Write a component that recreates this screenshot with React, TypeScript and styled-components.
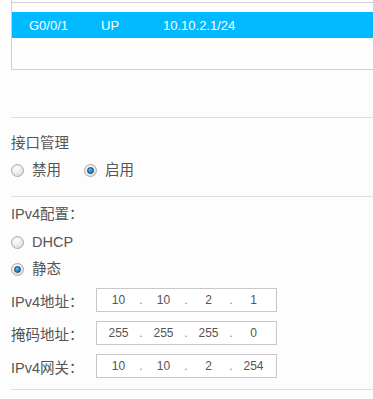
import { Fragment } from 'react';
import styled, { createGlobalStyle } from 'styled-components';

const GlobalStyle = createGlobalStyle`
  html, body {
    margin: 0;
    padding: 0;
    background: #fdfdfd;
    overflow: hidden;
  }
  body {
    font-family: 'Liberation Sans', Arial, 'Noto Sans CJK SC', sans-serif;
    color: #555;
  }
`;

const Page = styled.div`
  width: 373px;
  padding-left: 11px;
  box-sizing: border-box;
`;

const TableBox = styled.div`
  height: 69px;
  border-left: 1px solid #cfcfcf;
  border-bottom: 1px solid #cfcfcf;
  background: #fefefe;
`;

const HeadEdge = styled.div`
  height: 2px;
  border-bottom: 1px solid #cfcfcf;
  margin-bottom: 9px;
`;

const Row = styled.div<{ $active?: boolean }>`
  height: 26px;
  display: flex;
  align-items: center;
  padding-left: 17px;
  font-size: 13px;
  color: ${(p) => (p.$active ? '#fff' : '#555')};
  background: ${(p) => (p.$active ? '#00b9ff' : 'transparent')};
`;

const Cell = styled.span<{ $w: number }>`
  width: ${(p) => p.$w}px;
  white-space: nowrap;
`;

const Divider = styled.div<{ $top: number }>`
  margin-top: ${(p) => p.$top}px;
  height: 1px;
  background: #dedede;
`;

const Section = styled.div<{ $pad: number }>`
  padding-top: ${(p) => p.$pad}px;
  display: flex;
  flex-direction: column;
`;

const Title = styled.div`
  height: 20px;
  line-height: 20px;
  font-size: 14.5px;
`;

const RadioLine = styled.div<{ $gap: number }>`
  margin-top: ${(p) => p.$gap}px;
  height: 20px;
  display: flex;
  align-items: center;
  gap: 23px;
`;

const RadioItem = styled.label`
  display: flex;
  align-items: center;
  gap: 8px;
  font-size: 14.5px;
  line-height: 20px;
`;

const Dot = styled.span<{ $on?: boolean }>`
  width: 11px;
  height: 11px;
  border-radius: 50%;
  border: 1px solid #a9a9a9;
  background: radial-gradient(circle at 40% 35%, #ffffff 0%, #e6e6e6 60%, #cfcfcf 100%);
  display: flex;
  align-items: center;
  justify-content: center;
  &::after {
    content: '';
    display: ${(p) => (p.$on ? 'block' : 'none')};
    width: 5px;
    height: 5px;
    border-radius: 50%;
    border: 1px solid #123b5e;
    background: radial-gradient(circle at 40% 35%, #5fc1f5 0%, #1487cf 60%, #0b5a98 100%);
  }
`;

const Field = styled.div`
  margin-top: 9px;
  display: flex;
  align-items: center;
  height: 24px;
`;

const FieldLabel = styled.span`
  width: 85px;
  font-size: 14.5px;
`;

const IpBox = styled.div`
  width: 181px;
  height: 24px;
  box-sizing: border-box;
  border: 1px solid #c8c8c8;
  background: #fff;
  display: flex;
  align-items: center;
  padding: 0 6px 0 5px;
  font-size: 12px;
  color: #555;
`;

const Part = styled.span`
  width: 33px;
  text-align: center;
`;

const Sep = styled.span`
  width: 12px;
  text-align: center;
  color: #888;
`;

function Ip({ parts }: { parts: string[] }) {
  return (
    <IpBox>
      {parts.map((p, i) => (
        <Fragment key={i}>
          {i > 0 && <Sep>.</Sep>}
          <Part>{p}</Part>
        </Fragment>
      ))}
    </IpBox>
  );
}

export default function App() {
  return (
    <>
      <GlobalStyle />
      <Page>
        <TableBox>
          <HeadEdge />
          <Row $active>
            <Cell $w={72}>G0/0/1</Cell>
            <Cell $w={62}>UP</Cell>
            <Cell $w={100}>10.10.2.1/24</Cell>
          </Row>
        </TableBox>

        <Divider $top={47} />
        <Section $pad={15}>
          <Title>接口管理</Title>
          <RadioLine $gap={7}>
            <RadioItem>
              <Dot />
              禁用
            </RadioItem>
            <RadioItem>
              <Dot $on />
              启用
            </RadioItem>
          </RadioLine>
        </Section>

        <Divider $top={16} />
        <Section $pad={7}>
          <Title>IPv4配置：</Title>
          <RadioLine $gap={8}>
            <RadioItem>
              <Dot />
              DHCP
            </RadioItem>
          </RadioLine>
          <RadioLine $gap={7}>
            <RadioItem>
              <Dot $on />
              静态
            </RadioItem>
          </RadioLine>
          <Field>
            <FieldLabel>IPv4地址：</FieldLabel>
            <Ip parts={['10', '10', '2', '1']} />
          </Field>
          <Field>
            <FieldLabel>掩码地址：</FieldLabel>
            <Ip parts={['255', '255', '255', '0']} />
          </Field>
          <Field>
            <FieldLabel>IPv4网关：</FieldLabel>
            <Ip parts={['10', '10', '2', '254']} />
          </Field>
        </Section>
        <Divider $top={11} />
      </Page>
    </>
  );
}
